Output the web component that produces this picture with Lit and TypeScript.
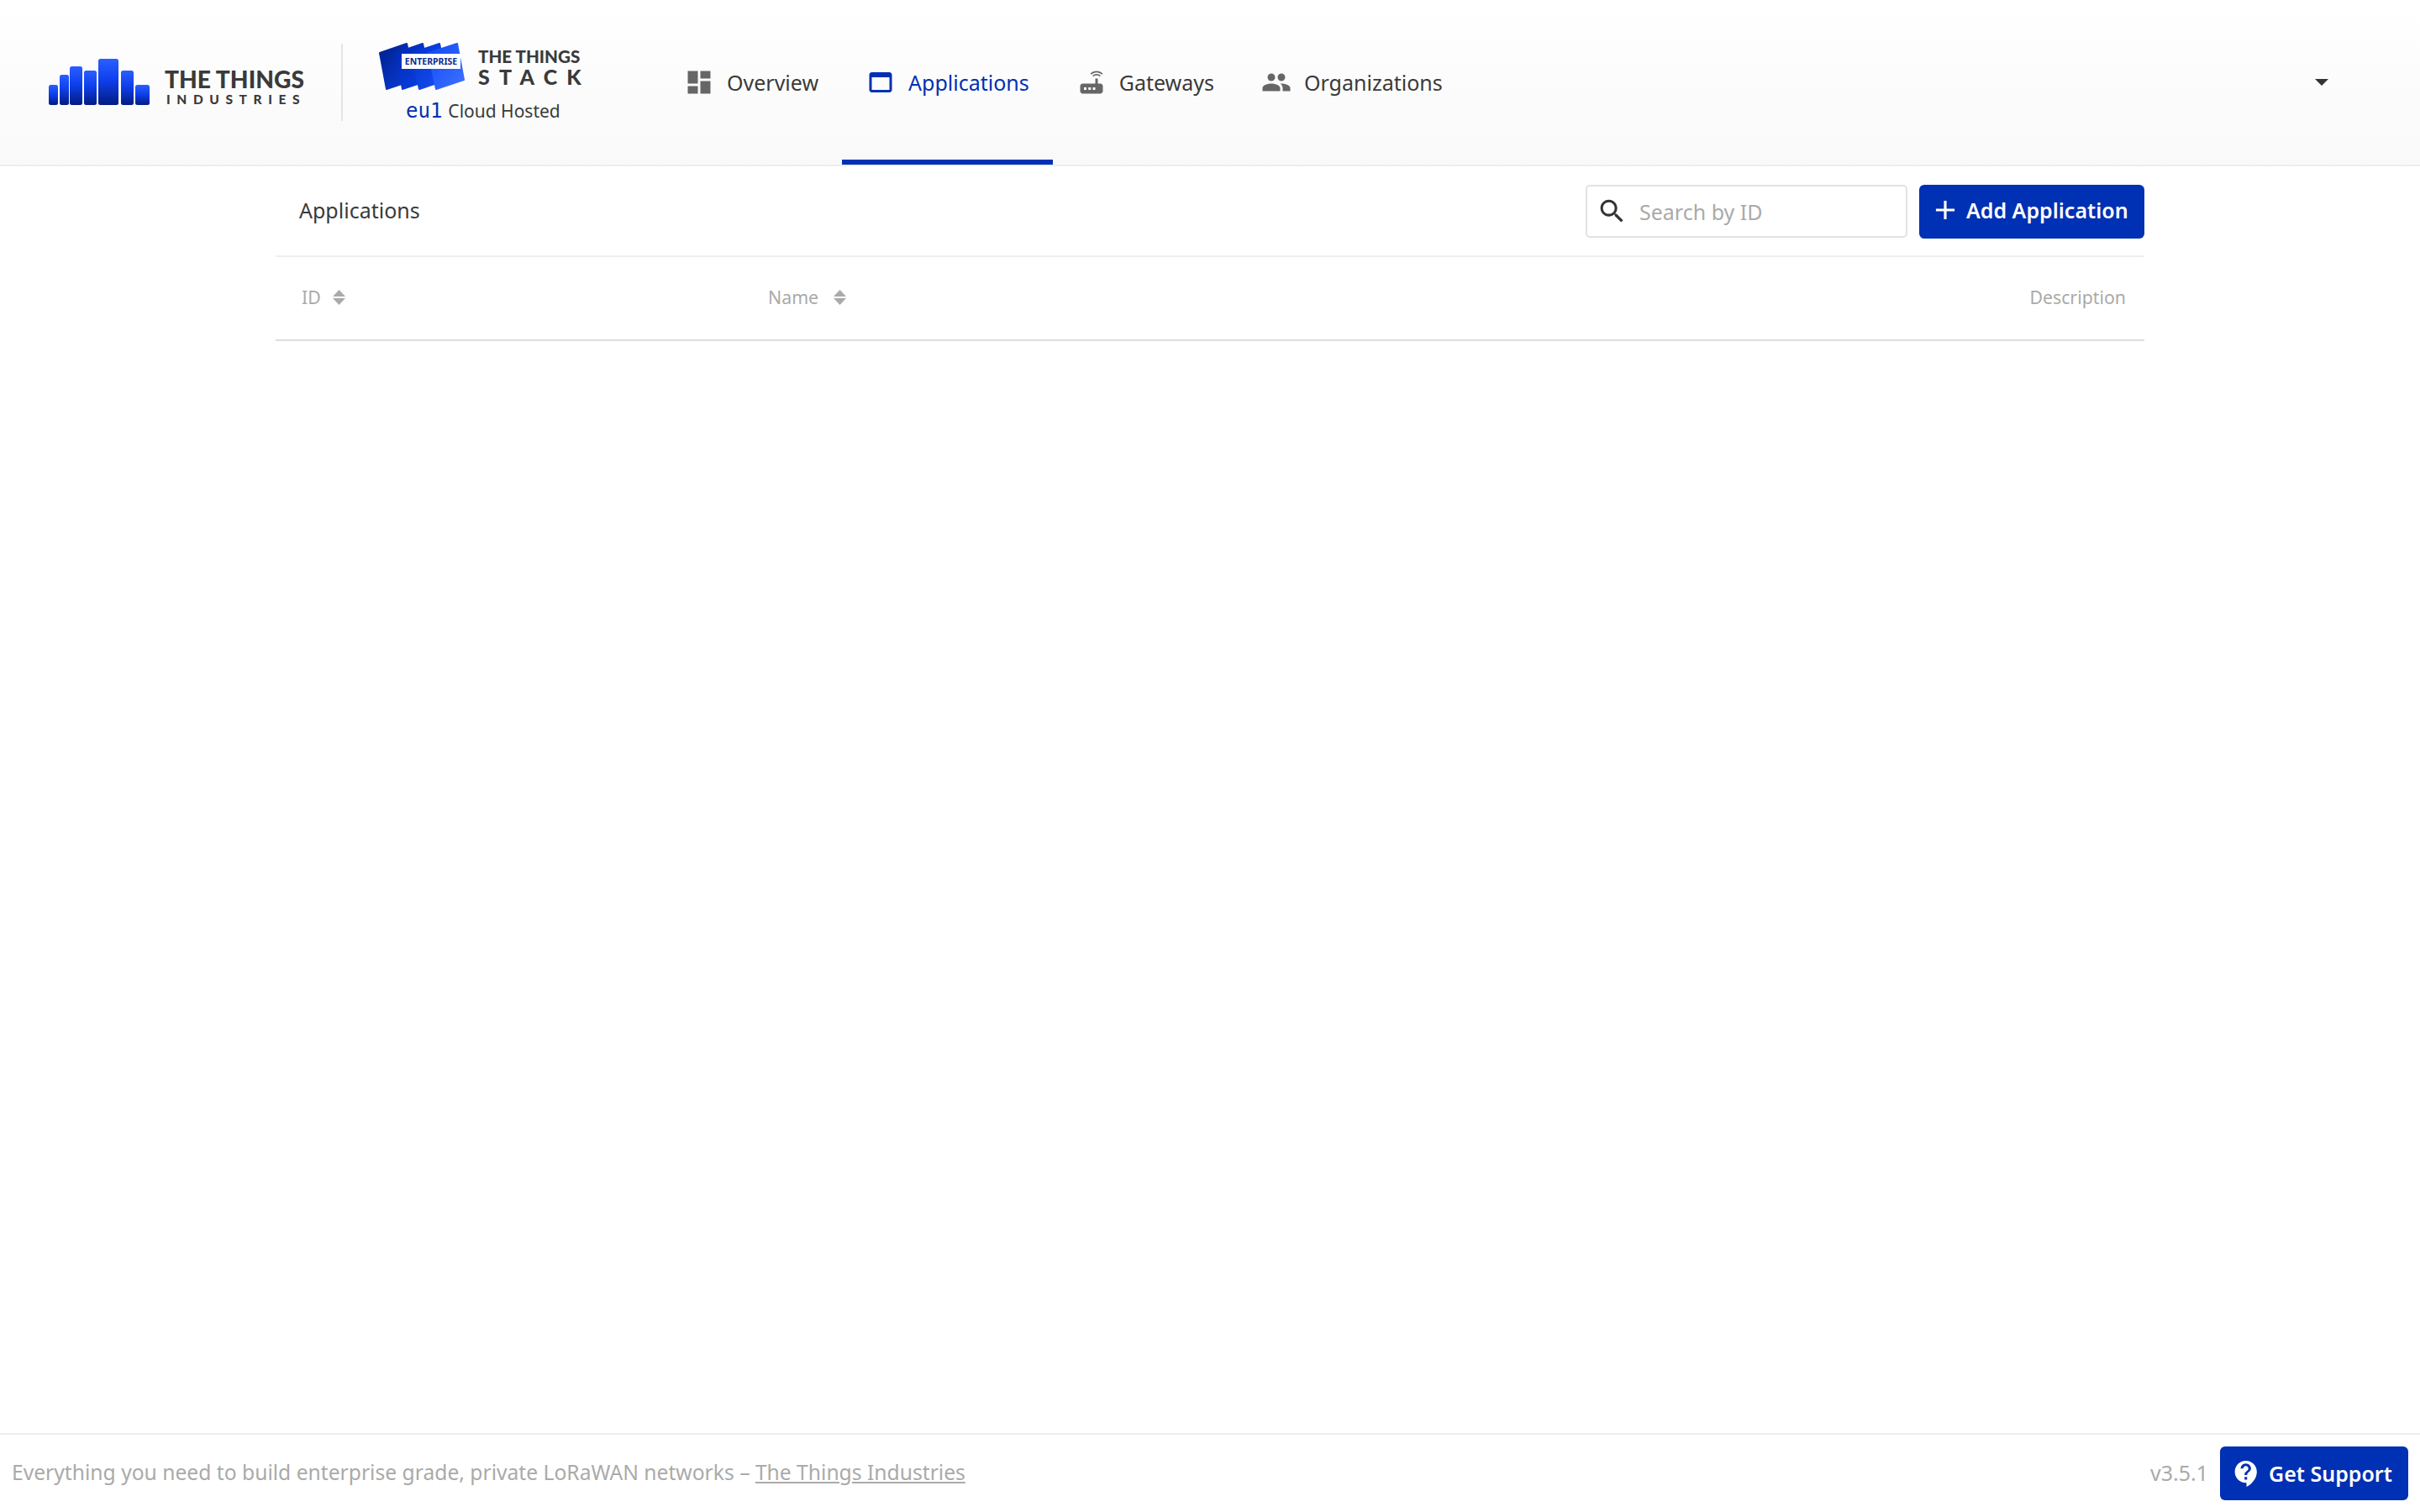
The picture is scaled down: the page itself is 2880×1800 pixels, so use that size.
import { css, html, LitElement, svg } from "lit";
import { customElement, property } from "lit/decorators.js";

const ICONS: Record<string, string> = {
  overview: "M3 13h8V3H3v10zm0 8h8v-6H3v6zm10 0h8V11h-8v10zm0-18v6h8V3h-8z",
  applications:
    "M19 4H5c-1.11 0-2 .9-2 2v12c0 1.1.89 2 2 2h14c1.1 0 2-.9 2-2V6c0-1.1-.9-2-2-2zm0 14H5V8h14v10z",
  gateways:
    "M20.2 5.9l.8-.8C19.6 3.7 17.8 3 16 3s-3.6.7-5 2.1l.8.8C13 4.8 14.5 4.2 16 4.2s3 .6 4.2 1.7zm-.9.8c-.9-.9-2.1-1.4-3.3-1.4s-2.4.5-3.3 1.4l.8.8c.7-.7 1.6-1 2.5-1 .9 0 1.8.3 2.5 1l.8-.8zM19 13h-2V9h-2v4H5c-1.1 0-2 .9-2 2v4c0 1.1.9 2 2 2h14c1.1 0 2-.9 2-2v-4c0-1.1-.9-2-2-2zM8 18H6v-2h2v2zm3.5 0h-2v-2h2v2zm3.5 0h-2v-2h2v2z",
  organizations:
    "M16 11c1.66 0 2.99-1.34 2.99-3S17.66 5 16 5c-1.66 0-3 1.34-3 3s1.34 3 3 3zm-8 0c1.66 0 2.99-1.34 2.99-3S9.66 5 8 5C6.34 5 5 6.34 5 8s1.34 3 3 3zm0 2c-2.33 0-7 1.17-7 3.5V19h14v-2.5c0-2.33-4.67-3.5-7-3.5zm8 0c-.29 0-.62.02-.97.05 1.16.84 1.97 1.97 1.97 3.45V19h6v-2.5c0-2.33-4.67-3.5-7-3.5z",
  search:
    "M15.5 14h-.79l-.28-.27C15.41 12.59 16 11.11 16 9.5 16 5.91 13.09 3 9.5 3S3 5.91 3 9.5 5.91 16 9.5 16c1.61 0 3.09-.59 4.23-1.57l.27.28v.79l5 4.99L20.49 19l-4.99-5zm-6 0C7.01 14 5 11.99 5 9.5S7.01 5 9.5 5 14 7.01 14 9.5 11.99 14 9.5 14z",
  add: "M19 13h-6v6h-2v-6H5v-2h6V5h2v6h6v2z",
  support:
    "M11.5 2C6.81 2 3 5.81 3 10.5S6.81 19 11.5 19h.5v3c4.86-2.34 8-7 8-11.5C20 5.81 16.19 2 11.5 2zm1 14.5h-2v-2h2v2zm0-3.5h-2c0-3.25 3-3 3-5 0-1.1-.9-2-2-2s-2 .9-2 2h-2c0-2.21 1.79-4 4-4s4 1.79 4 4c0 2.5-3 2.75-3 5z",
};

const NAV = [
  { id: "overview", label: "Overview" },
  { id: "applications", label: "Applications", active: true },
  { id: "gateways", label: "Gateways" },
  { id: "organizations", label: "Organizations" },
];

// x, y, w, h of each bar in the company mark
const BARS = [
  [0, 31, 11, 24],
  [13, 19, 11, 36],
  [25, 9, 15, 46],
  [42, 14, 15, 41],
  [59, 0, 24, 55],
  [86, 14, 15, 41],
  [103, 31, 17, 24],
];

const CARDS = [
  { d: "M2 13 L34 2 L43 45 L10 56 Z", fill: "url(#c1)" },
  { d: "M21 13 L53 2 L62 45 L29 56 Z", fill: "url(#c2)" },
  { d: "M40 13 L73 2 L82 45 L49 56 Z", fill: "url(#c3)" },
  { d: "M60 13 L94 2 L102 45 L69 56 Z", fill: "url(#c4)" },
];

@customElement("md-icon")
export class MdIcon extends LitElement {
  static styles = css`
    :host {
      display: block;
      flex: none;
    }
    svg {
      display: block;
      fill: currentColor;
    }
  `;

  @property({ type: String }) name = "";
  @property({ type: Number }) size = 36;

  render() {
    return html`<svg
      width=${this.size}
      height=${this.size}
      viewBox="0 0 24 24"
    >
      ${svg`<path d=${ICONS[this.name]}></path>`}
    </svg>`;
  }
}

@customElement("app-root")
export class AppRoot extends LitElement {
  static styles = css`
    :host {
      display: flex;
      flex-direction: column;
      height: 1800px;
      background: #fff;
      color: #3a3a3a;
      font-family: "Noto Sans", "Open Sans", sans-serif;
      font-size: 25px;
    }

    header {
      display: flex;
      align-items: stretch;
      flex: none;
      height: 196px;
      padding-left: 58px;
      background: linear-gradient(#fff, #f9f9f9);
      border-bottom: 2px solid #eee;
    }
    .brand {
      display: flex;
      align-items: center;
      flex: none;
      width: 348px;
    }
    .brand svg {
      display: block;
      flex: none;
      margin-top: -1px;
    }
    .brand-text {
      display: flex;
      flex-direction: column;
      margin: 10px 0 0 18px;
      font-family: "Lato", sans-serif;
      font-weight: 900;
      white-space: nowrap;
    }
    .brand-main {
      font-size: 28.2px;
      line-height: 30px;
    }
    .brand-sub {
      font-size: 15.5px;
      line-height: 18px;
      letter-spacing: 7.6px;
      margin-left: 2px;
    }
    .divider {
      flex: none;
      width: 2px;
      height: 92px;
      margin-top: 52px;
      background: #e4e4e4;
    }
    .stack {
      display: flex;
      flex-direction: column;
      flex: none;
      width: 336px;
      padding: 50px 0 0 42px;
    }
    .stack-logo {
      display: flex;
      align-items: center;
    }
    .stack-logo svg {
      display: block;
      flex: none;
    }
    .stack-text {
      display: flex;
      flex-direction: column;
      margin-left: 16px;
      font-family: "Lato", sans-serif;
      font-weight: 900;
      white-space: nowrap;
    }
    .stack-main {
      font-size: 20.6px;
      line-height: 23px;
    }
    .stack-sub {
      font-size: 25px;
      line-height: 24px;
      letter-spacing: 11.2px;
    }
    .cluster {
      display: flex;
      align-items: center;
      gap: 7px;
      margin: 10px 0 0 33px;
      font-size: 21px;
      line-height: 28px;
      white-space: nowrap;
    }
    .cluster code {
      font-family: "DejaVu Sans Mono", "Liberation Mono", monospace;
      font-size: 24px;
      color: #0030b3;
    }

    nav {
      display: flex;
      align-items: stretch;
    }
    .tab {
      display: flex;
      align-items: center;
      gap: 15px;
      padding: 6px 28px 0;
      border-bottom: 6px solid transparent;
      white-space: nowrap;
    }
    .tab md-icon {
      color: #666;
    }
    .tab.active {
      border-bottom-color: #0030b3;
      color: #0030b3;
    }
    .tab.active md-icon {
      color: #0030b3;
    }
    .account {
      flex: none;
      align-self: center;
      width: 0;
      height: 0;
      margin: 0 109px 0 auto;
      border-left: 8px solid transparent;
      border-right: 8px solid transparent;
      border-top: 8px solid #333;
    }

    main {
      flex: 1;
      width: 2224px;
      margin: 0 auto;
    }
    .toolbar {
      display: flex;
      align-items: center;
      height: 105px;
      padding: 1px 0 0 28px;
      border-bottom: 2px solid #eee;
    }
    .toolbar h1 {
      margin: -3px auto 0 0;
      font-size: 25px;
      font-weight: 400;
    }
    .search {
      display: flex;
      align-items: center;
      gap: 14px;
      box-sizing: border-box;
      width: 383px;
      height: 63px;
      padding-left: 11px;
      border: 2px solid #e2e2e2;
      border-radius: 5px;
      background: #fff;
      color: #333;
    }
    .search input {
      flex: 1;
      min-width: 0;
      padding: 0;
      border: 0;
      outline: 0;
      background: none;
      font: inherit;
      color: #333;
    }
    .search input::placeholder {
      color: #aaa;
      opacity: 1;
    }
    .btn {
      display: flex;
      align-items: center;
      box-sizing: border-box;
      height: 64px;
      border: 0;
      border-radius: 6px;
      background: #0030b3;
      color: #fff;
      font: inherit;
      font-weight: 600;
      white-space: nowrap;
    }
    .btn.add {
      gap: 6px;
      width: 268px;
      margin-left: 14px;
      padding: 0 0 3px 12px;
    }
    .thead {
      display: grid;
      grid-template-columns: 555px 1fr auto;
      align-items: center;
      height: 95px;
      padding: 0 22px 3px 31px;
      border-bottom: 2px solid #ddd;
      color: #aaa;
      font-size: 21.3px;
    }
    .th {
      display: flex;
      align-items: center;
      gap: 18px;
    }
    .th:first-child {
      gap: 14px;
    }
    .th svg {
      display: block;
      fill: #aaa;
    }

    footer {
      display: flex;
      align-items: center;
      flex: none;
      height: 92px;
      padding: 0 14px;
      border-top: 2px solid #eee;
      color: #aaa;
    }
    footer .claim {
      margin: 0 auto 3px 0;
      font-size: 24.65px;
      white-space: nowrap;
    }
    footer a {
      color: inherit;
      text-decoration: underline;
    }
    .version {
      margin: 0 14px 3px 0;
    }
    .btn.support {
      gap: 8px;
      width: 224px;
      padding-left: 13px;
    }
  `;

  private companyMark() {
    return html`<svg width="120" height="55" viewBox="0 0 120 55">
      <defs>
        <linearGradient id="bar" x1="0" y1="0" x2="0" y2="1">
          <stop offset="0" stop-color="#2a5fff"></stop>
          <stop offset="0.45" stop-color="#0f40ee"></stop>
          <stop offset="1" stop-color="#021c82"></stop>
        </linearGradient>
      </defs>
      ${BARS.map(
        ([x, y, w, h]) => svg`<rect
          x=${x}
          y=${y}
          width=${w}
          height=${h}
          rx="2.5"
          fill="url(#bar)"
        ></rect>`,
      )}
    </svg>`;
  }

  private stackMark() {
    return html`<svg width="103" height="58" viewBox="0 0 103 58">
      <defs>
        <linearGradient id="c1" x1="0" y1="0" x2="1" y2="1">
          <stop offset="0" stop-color="#001f8c"></stop>
          <stop offset="1" stop-color="#0a3fe0"></stop>
        </linearGradient>
        <linearGradient id="c2" x1="0" y1="0" x2="1" y2="1">
          <stop offset="0" stop-color="#0029b0"></stop>
          <stop offset="1" stop-color="#0c42ea"></stop>
        </linearGradient>
        <linearGradient id="c3" x1="0" y1="0" x2="1" y2="1">
          <stop offset="0" stop-color="#0033cc"></stop>
          <stop offset="1" stop-color="#1a50f5"></stop>
        </linearGradient>
        <linearGradient id="c4" x1="0" y1="0" x2="1" y2="1">
          <stop offset="0" stop-color="#0f48f5"></stop>
          <stop offset="1" stop-color="#3f72ff"></stop>
        </linearGradient>
      </defs>
      ${CARDS.map(
        (c) => svg`<path
          d=${c.d}
          fill=${c.fill}
          stroke=${c.fill}
          stroke-width="2"
          stroke-linejoin="round"
        ></path>`,
      )}
      <rect x="28" y="14" width="70" height="18" fill="#fff"></rect>
      <text
        x="63"
        y="27"
        text-anchor="middle"
        font-family="Noto Sans, sans-serif"
        font-size="10.5"
        font-weight="700"
        fill="#0a2a8f"
      >
        ENTERPRISE
      </text>
    </svg>`;
  }

  private sortIcon() {
    return html`<svg width="15" height="18" viewBox="0 0 15 18">
      <polygon points="7.5,0 15,8 0,8"></polygon>
      <polygon points="0,10 15,10 7.5,18"></polygon>
    </svg>`;
  }

  render() {
    return html`
      <header>
        <div class="brand">
          ${this.companyMark()}
          <div class="brand-text">
            <span class="brand-main">THE THINGS</span>
            <span class="brand-sub">INDUSTRIES</span>
          </div>
        </div>
        <div class="divider"></div>
        <div class="stack">
          <div class="stack-logo">
            ${this.stackMark()}
            <div class="stack-text">
              <span class="stack-main">THE THINGS</span>
              <span class="stack-sub">STACK</span>
            </div>
          </div>
          <div class="cluster"><code>eu1</code> Cloud Hosted</div>
        </div>
        <nav>
          ${NAV.map(
            (item) => html`<div class="tab ${item.active ? "active" : ""}">
              <md-icon name=${item.id}></md-icon>
              <span>${item.label}</span>
            </div>`,
          )}
        </nav>
        <div class="account"></div>
      </header>
      <main>
        <div class="toolbar">
          <h1>Applications</h1>
          <label class="search">
            <md-icon name="search" size="37"></md-icon>
            <input placeholder="Search by ID" />
          </label>
          <button class="btn add">
            <md-icon name="add" size="38"></md-icon>Add Application
          </button>
        </div>
        <div class="thead">
          <div class="th">ID ${this.sortIcon()}</div>
          <div class="th">Name ${this.sortIcon()}</div>
          <div>Description</div>
        </div>
      </main>
      <footer>
        <div class="claim">
          Everything you need to build enterprise grade, private LoRaWAN
          networks – <a>The Things Industries</a>
        </div>
        <div class="version">v3.5.1</div>
        <button class="btn support">
          <md-icon name="support" size="37"></md-icon>Get Support
        </button>
      </footer>
    `;
  }
}
